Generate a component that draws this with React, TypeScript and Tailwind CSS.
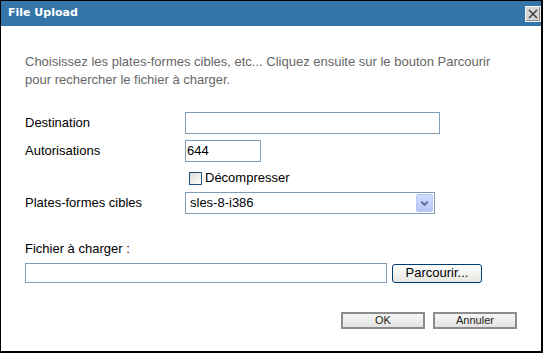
import { ChevronDown } from "lucide-react";

const font = { fontFamily: '"Liberation Sans", Arial, sans-serif' };

const Field = ({ label, children }: { label: string; children: React.ReactNode }) => (
  <div className="flex items-center">
    <div className="w-[160px] text-[13px] text-black">{label}</div>
    {children}
  </div>
);

const App = () => {
  return (
    <div
      className="flex h-[353px] w-[543px] flex-col border border-r-2 border-b-2 border-black bg-white"
      style={font}
    >
      {/* Title bar */}
      <div className="flex h-[25px] shrink-0 items-center justify-between bg-[#3475aa] pl-[7px] pr-[0px]">
        <span
          className="text-[11px] font-bold text-white"
          style={{ fontFamily: '"DejaVu Sans", Verdana, sans-serif' }}
        >
          File Upload
        </span>
        <div className="flex h-[16px] w-[16px] items-center justify-center border border-[#f4f4f4] bg-[#d6d6d6] shadow-[inset_-1px_-1px_0_#8d8d8d]">
          <svg width="10" height="10" viewBox="0 0 10 10">
            <path d="M1 1 L9 9 M9 1 L1 9" stroke="#404040" strokeWidth="1.6" />
          </svg>
        </div>
      </div>

      {/* Body */}
      <div className="flex flex-1 flex-col pl-[24px] pr-[24px]">
        <p className="mt-[27px] text-[13px] leading-[18px] text-[#666]">
          Choisissez les plates-formes cibles, etc... Cliquez ensuite sur le bouton Parcourir
          <br />
          pour rechercher le fichier à charger.
        </p>

        <div className="mt-[23px] flex flex-col">
          <Field label="Destination">
            <div className="h-[22px] w-[255px] border border-[#7f9db9] bg-white" />
          </Field>

          <div className="mt-[6px]">
            <Field label="Autorisations">
              <div className="flex h-[22px] w-[76px] items-center border border-[#7f9db9] bg-white pl-[1px] text-[13px] text-black">
                644
              </div>
            </Field>
          </div>

          {/* Checkbox */}
          <div className="mt-[9px] flex items-center pl-[164px]">
            <div className="h-[13px] w-[13px] border border-[#1c5180] bg-gradient-to-br from-[#dcdcd7] to-white" />
            <span className="ml-[3px] text-[13px] leading-[14px] text-black">Décompresser</span>
          </div>

          <div className="mt-[7px]">
            <Field label="Plates-formes cibles">
              <div className="flex h-[22px] w-[250px] items-center justify-between border border-[#7f9db9] bg-white pl-[4px] pr-[1px] text-[13px] text-black">
                <span>sles-8-i386</span>
                <div className="flex h-[18px] w-[17px] items-center justify-center rounded-[2px] border border-[#b6c8f7] bg-gradient-to-b from-[#d0dcfc] to-[#b4c6f6]">
                  <ChevronDown size={11} strokeWidth={3.5} color="#4d6185" />
                </div>
              </div>
            </Field>
          </div>
        </div>

        {/* File */}
        <div className="mt-[27px] text-[13px] leading-[16px] text-black">Fichier à charger :</div>
        <div className="mt-[6px] flex items-center">
          <div className="h-[20px] w-[362px] border border-[#7f9db9] bg-white" />
          <button className="ml-[5px] flex h-[19px] w-[90px] items-center justify-center rounded-[3px] border border-[#003c74] bg-gradient-to-b from-white to-[#e6e6e0] text-[13px] text-black">
            Parcourir...
          </button>
        </div>

        {/* Actions */}
        <div className="mt-[29px] flex justify-end gap-[8px] pr-[0px]">
          <button className="flex h-[17px] w-[84px] items-center justify-center border-2 border-[#8c8c8c] bg-gradient-to-b from-[#f6f6f6] to-[#e4e4e4] text-[11px] text-[#222]">
            OK
          </button>
          <button className="flex h-[17px] w-[84px] items-center justify-center border-2 border-[#8c8c8c] bg-gradient-to-b from-[#f6f6f6] to-[#e4e4e4] text-[11px] text-[#222]">
            Annuler
          </button>
        </div>
      </div>
    </div>
  );
};

export default App;
